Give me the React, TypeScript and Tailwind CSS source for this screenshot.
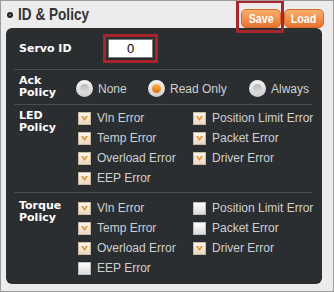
import React from "react";

const LABEL = "font-['DejaVu_Sans','Liberation_Sans',sans-serif] font-bold text-[11px] leading-[12px] text-white";
const ITEM = "font-['Liberation_Sans','Noto_Sans_CJK_KR',sans-serif] text-[12px] text-[#d0d0d0]";

function Check({ on }: { on: boolean }) {
  return (
    <span
      className={`w-[13px] h-[13px] shrink-0 border flex items-center justify-center ${
        on
          ? "border-[#c9b9a3] bg-gradient-to-b from-[#fdf6ec] to-[#ead8c2]"
          : "border-[#bdbdbd] bg-gradient-to-b from-[#ffffff] to-[#dcdcdc]"
      }`}
    >
      {on && (
        <svg width="9" height="8" viewBox="0 0 9 8">
          <path d="M1 2 L4.5 7 L8 2 L6 2 L4.5 4.5 L3 2 Z" fill="#e4902f" />
        </svg>
      )}
    </span>
  );
}

function Radio({ on }: { on: boolean }) {
  return (
    <span className="w-[17px] h-[17px] shrink-0 rounded-full bg-gradient-to-b from-[#f4f4f4] to-[#cfcfcf] flex items-center justify-center">
      <span
        className={`w-[9px] h-[9px] rounded-full ${
          on
            ? "bg-gradient-to-b from-[#ffb24a] to-[#e0700f]"
            : "bg-gradient-to-b from-[#b9b9b9] to-[#dedede]"
        }`}
      />
    </span>
  );
}

function Item({ on, text }: { on: boolean; text: string }) {
  return (
    <div className="h-[20px] flex items-center gap-[6px]">
      <Check on={on} />
      <span className={ITEM}>{text}</span>
    </div>
  );
}

function PolicyBlock({
  title,
  left,
  right,
  top,
}: {
  title: string;
  left: [string, boolean][];
  right: [string, boolean][];
  top: string;
}) {
  return (
    <div className={`flex pl-[13px] pb-[4px] ${top}`}>
      <div className={`w-[59px] pt-[2px] ${LABEL}`}>
        {title}
        <br />
        Policy
      </div>
      <div className="w-[115px]">
        {left.map(([t, on]) => (
          <Item key={t} on={on} text={t} />
        ))}
      </div>
      <div>
        {right.map(([t, on]) => (
          <Item key={t} on={on} text={t} />
        ))}
      </div>
    </div>
  );
}

const Divider = () => <div className="ml-[8px] mr-[10px] border-t border-[#4a4d50]" />;

const OrangeBtn = ({ label }: { label: string }) => (
  <button className="w-[40px] h-[19px] rounded-[5px] border border-[#d4692a] bg-gradient-to-b from-[#f9ae6c] to-[#e8722c] flex items-center justify-center">
    <span className="inline-block scale-x-[0.82] text-white font-bold text-[13px] leading-none font-['Liberation_Sans',sans-serif]">
      {label}
    </span>
  </button>
);

export default function App() {
  return (
    <div className="relative w-[334px] h-[292px] bg-[#ececec] border border-[#9c9c9c] overflow-hidden">
      {/* header */}
      <div className="h-[27px] flex items-center justify-between pl-[6px] pr-[9px]">
        <div className="flex items-center gap-[5px]">
          <span className="w-[6px] h-[6px] rounded-full border-2 border-[#222] bg-[#888]" />
          <span className="inline-block origin-left scale-x-[0.8] text-[17px] font-bold text-[#333] font-['Liberation_Sans',sans-serif]">
            ID &amp; Policy
          </span>
        </div>
        <div className="flex items-center gap-[3px] pt-[7px]">
          <OrangeBtn label="Save" />
          <OrangeBtn label="Load" />
        </div>
      </div>

      {/* panel */}
      <div className="ml-[5px] w-[316px] h-[256px] rounded-[6px] bg-[#2b2e30]">
        <div className="h-[41px] flex items-center pl-[13px]">
          <span className={`w-[84px] ${LABEL}`}>Servo ID</span>
          <div className="border-[3px] border-[#a8262b] p-[2px]">
            <div className="w-[45px] h-[19px] bg-white border border-[#7a7a7a] flex items-center justify-center font-['Liberation_Sans',sans-serif] text-[13px] text-black">
              0
            </div>
          </div>
        </div>
        <Divider />
        <div className="h-[34px] flex items-center pl-[13px]">
          <div className={`w-[57px] ${LABEL}`}>
            Ack
            <br />
            Policy
          </div>
          <div className="w-[72px] flex items-center gap-[5px] pt-[3px]">
            <Radio on={false} />
            <span className={ITEM}>None</span>
          </div>
          <div className="w-[101px] flex items-center gap-[5px] pt-[3px]">
            <Radio on={true} />
            <span className={ITEM}>Read Only</span>
          </div>
          <div className="flex items-center gap-[5px] pt-[3px]">
            <Radio on={false} />
            <span className={ITEM}>Always</span>
          </div>
        </div>
        <Divider />
        <PolicyBlock
          title="LED"
          top="pt-[3px]"
          left={[
            ["Vln Error", true],
            ["Temp Error", true],
            ["Overload Error", true],
            ["EEP Error", true],
          ]}
          right={[
            ["Position Limit Error", true],
            ["Packet Error", true],
            ["Driver Error", true],
          ]}
        />
        <Divider />
        <PolicyBlock
          title="Torque"
          top="pt-[5px]"
          left={[
            ["Vln Error", true],
            ["Temp Error", true],
            ["Overload Error", true],
            ["EEP Error", false],
          ]}
          right={[
            ["Position Limit Error", false],
            ["Packet Error", false],
            ["Driver Error", true],
          ]}
        />
      </div>

      {/* highlight around Save */}
      <div className="absolute left-[235px] top-[-1px] w-[48px] h-[33px] border-[3px] border-[#a8262b]" />
    </div>
  );
}
